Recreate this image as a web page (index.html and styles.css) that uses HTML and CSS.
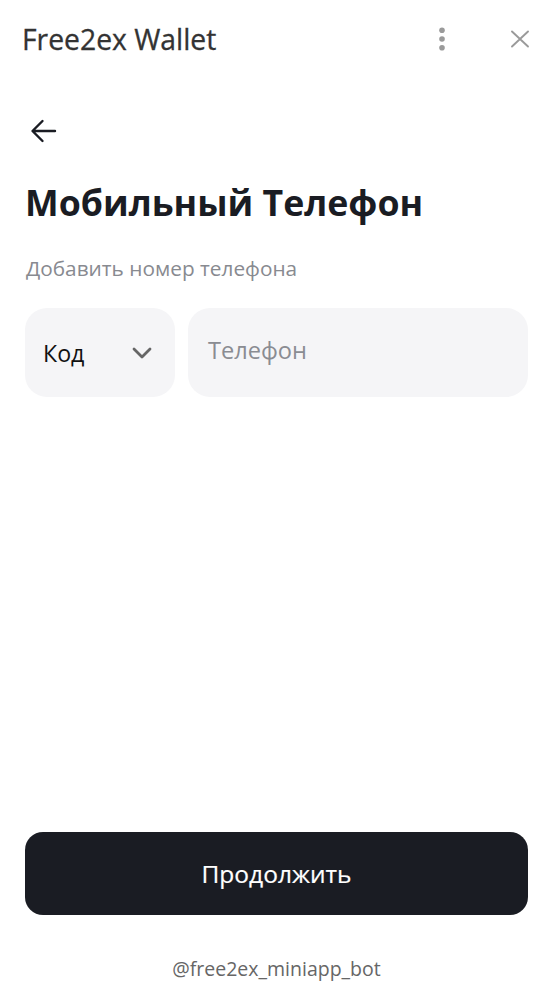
FILE: index.html
```html
<!DOCTYPE html>
<html lang="ru">
<head>
<meta charset="utf-8">
<title>Free2ex Wallet</title>
<link rel="stylesheet" href="styles.css">
</head>
<body>
<div class="app">
  <header class="topbar">
    <div class="app-title">Free2ex Wallet</div>
    <div class="top-actions">
      <svg class="kebab" width="8" height="24" viewBox="0 0 8 24"><circle cx="4" cy="3.2" r="2.8" fill="#9a9a9a"/><circle cx="4" cy="12" r="2.8" fill="#9a9a9a"/><circle cx="4" cy="20.8" r="2.8" fill="#9a9a9a"/></svg>
      <svg class="close" width="20" height="20" viewBox="0 0 20 20"><path d="M2 2.5 L18 17.5 M18 2.5 L2 17.5" stroke="#9a9a9a" stroke-width="1.9" stroke-linecap="round"/></svg>
    </div>
  </header>
  <main class="content">
    <svg class="back" width="28" height="24" viewBox="0 0 28 24"><path d="M25 12 H3 M12.5 2 L2.5 12 L12.5 22" fill="none" stroke="#1a1c23" stroke-width="2.4" stroke-linecap="round" stroke-linejoin="round"/></svg>
    <h1 class="title">Мобильный Телефон</h1>
    <p class="subtitle">Добавить номер телефона</p>
    <div class="phone-row">
      <div class="code-box">
        <span class="code-label">Код</span>
        <svg class="chev" width="20" height="12" viewBox="0 0 20 12"><path d="M2 2 L10 10 L18 2" fill="none" stroke="#666" stroke-width="2.8" stroke-linecap="round" stroke-linejoin="round"/></svg>
      </div>
      <div class="phone-box"><span class="placeholder">Телефон</span></div>
    </div>
  </main>
  <footer class="bottom">
    <button class="continue">Продолжить</button>
    <div class="bot-name">@free2ex_miniapp_bot</div>
  </footer>
</div>
</body>
</html>
```
FILE: styles.css
```css
html, body {
  margin: 0;
  padding: 0;
  background: #fff;
}
body {
  font-family: "Open Sans", "Noto Sans", sans-serif;
  color: #1a1c23;
}
.app {
  width: 556px;
  height: 983px;
  display: flex;
  flex-direction: column;
  box-sizing: border-box;
}
.topbar {
  height: 78px;
  display: flex;
  align-items: center;
  justify-content: space-between;
  padding: 0 26px 0 22px;
}
.app-title {
  font-size: 28.3px;
  font-weight: 400;
  color: #333;
  -webkit-text-stroke: 0.3px #333;
}
.top-actions {
  display: flex;
  align-items: center;
  gap: 64px;
}
.content {
  flex: 1;
  padding: 0 28px 0 25px;
  display: flex;
  flex-direction: column;
}
.back {
  margin-top: 41px;
  margin-left: 5px;
}
.title {
  margin: 36px 0 0 0;
  font-size: 35.7px;
  font-weight: 700;
  line-height: 47px;
  color: #1a1c23;
}
.subtitle {
  margin: 28px 0 0 1px;
  font-size: 20.8px;
  color: #888a90;
  line-height: 29px;
}
.phone-row {
  margin-top: 25px;
  display: flex;
  gap: 13px;
}
.code-box {
  width: 150px;
  height: 89px;
  background: #f5f5f7;
  border-radius: 22px;
  display: flex;
  align-items: center;
  justify-content: space-between;
  padding: 0 23px 0 18px;
  box-sizing: border-box;
}
.code-label {
  font-size: 23.2px;
  color: #111;
}
.chev {
  margin-top: 1px;
}
.phone-box {
  flex: 1;
  height: 89px;
  background: #f5f5f7;
  border-radius: 22px;
  display: flex;
  align-items: center;
  padding: 0 20px;
  box-sizing: border-box;
}
.placeholder {
  font-size: 23.6px;
  color: #8a8c92;
  margin-bottom: 5px;
}
.bottom {
  padding: 0 28px 0 25px;
  display: flex;
  flex-direction: column;
  align-items: stretch;
}
.continue {
  height: 83px;
  border: none;
  border-radius: 18px;
  background: #1a1c23;
  color: #fff;
  font-family: "Open Sans", "Noto Sans", sans-serif;
  font-size: 24.5px;
  font-weight: 400;
  -webkit-text-stroke: 0.2px #fff;
}
.bot-name {
  margin-top: 40px;
  text-align: center;
  font-size: 19.5px;
  line-height: 28px;
  color: #666;
}
```
